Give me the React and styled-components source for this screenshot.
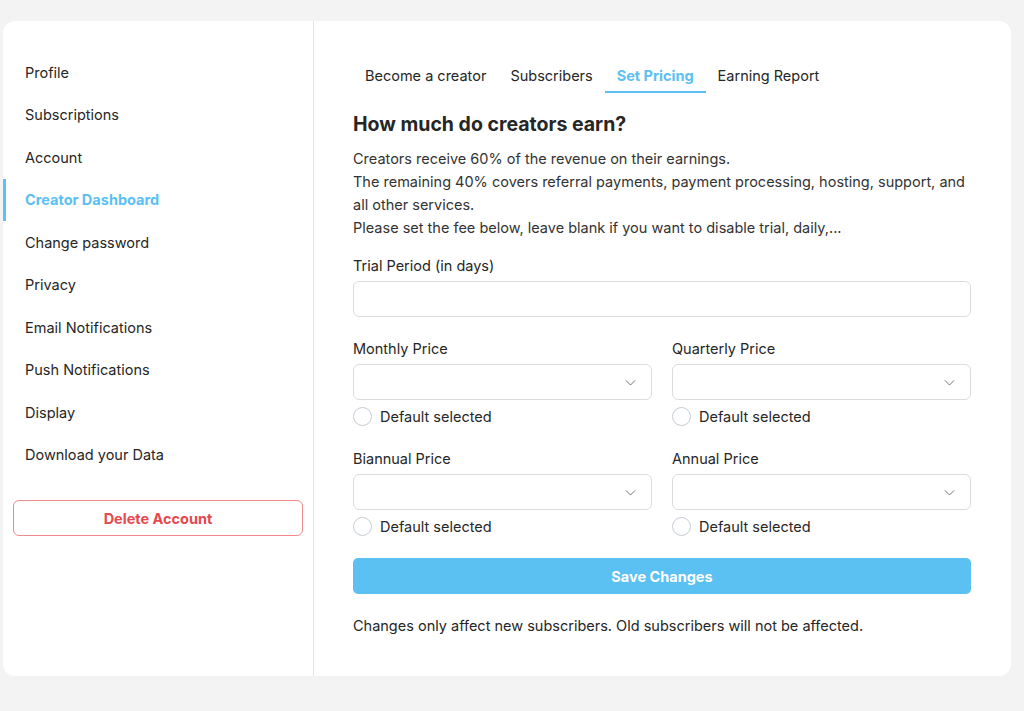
import React, { useState } from 'react';
import styled, { createGlobalStyle } from 'styled-components';

const GlobalStyle = createGlobalStyle`
  html, body {
    margin: 0;
    padding: 0;
    background: #f3f3f3;
  }
  body {
    font-family: 'Inter', 'Noto Sans', 'Liberation Sans', sans-serif;
    color: #262626;
  }
  * { box-sizing: border-box; }
`;

const Page = styled.div`
  padding: 21px 13px 35px 3px;
`;

const Card = styled.div`
  background: #ffffff;
  border-radius: 12px;
  display: flex;
  height: 655px;
  overflow: hidden;
`;

const Sidebar = styled.nav`
  width: 311px;
  flex-shrink: 0;
  border-right: 1px solid #e3e3e3;
  padding-top: 30px;
  display: flex;
  flex-direction: column;
`;

const NavItem = styled.a`
  height: 42.5px;
  display: flex;
  align-items: center;
  padding-left: 19px;
  border-left: 3px solid ${(p) => (p.$active ? '#5bc0f2' : 'transparent')};
  font-size: 14.5px;
  font-weight: ${(p) => (p.$active ? 700 : 400)};
  color: ${(p) => (p.$active ? '#5bc0f2' : '#262626')};
  cursor: pointer;
`;

const DeleteButton = styled.button`
  margin: 24px 10px 0;
  height: 36px;
  border: 1.5px solid #f08a8a;
  border-radius: 6px;
  background: #ffffff;
  color: #e5484d;
  font-family: inherit;
  font-size: 14.5px;
  font-weight: 700;
  cursor: pointer;
`;

const Main = styled.main`
  flex: 1;
  padding: 45px 40px 0 39px;
  display: flex;
  flex-direction: column;
`;

const Tabs = styled.div`
  display: flex;
`;

const Tab = styled.button`
  background: none;
  border: none;
  border-bottom: 2px solid ${(p) => (p.$active ? '#5bc0f2' : 'transparent')};
  padding: 0 12px 5px;
  line-height: 20px;
  font-family: inherit;
  font-size: 14.5px;
  font-weight: ${(p) => (p.$active ? 700 : 400)};
  color: ${(p) => (p.$active ? '#5bc0f2' : '#262626')};
  cursor: pointer;
`;

const Heading = styled.h2`
  margin: 17px 0 0;
  font-size: 19.5px;
  line-height: 28px;
  font-weight: 700;
  color: #262626;
`;

const Intro = styled.div`
  margin-top: 8.5px;
  font-size: 14.5px;
  line-height: 23px;
  color: #333;
`;

const Field = styled.div`
  display: flex;
  flex-direction: column;
  gap: 5px;
  margin-top: ${(p) => p.$top || 0}px;
`;

const Label = styled.label`
  font-size: 14.5px;
  line-height: 20px;
  color: #262626;
`;

const Input = styled.input`
  height: 36px;
  width: 100%;
  border: 1px solid #dcdcdc;
  border-radius: 6px;
  padding: 0 12px;
  font-family: inherit;
  font-size: 14.5px;
  outline: none;
`;

const PriceGrid = styled.div`
  display: grid;
  grid-template-columns: 1fr 1fr;
  column-gap: 20px;
  row-gap: 23px;
  margin-top: 22px;
`;

const SelectBox = styled.div`
  height: 36px;
  border: 1px solid #dcdcdc;
  border-radius: 6px;
  display: flex;
  align-items: center;
  justify-content: flex-end;
  padding-right: 13px;
  color: #6b6b6b;
  cursor: pointer;
`;

const RadioRow = styled.label`
  display: flex;
  align-items: center;
  gap: 8px;
  margin-top: 1px;
  height: 20px;
  font-size: 14.5px;
  color: #262626;
  cursor: pointer;
`;

const Circle = styled.span`
  width: 19px;
  height: 19px;
  border-radius: 50%;
  border: 1.5px solid ${(p) => (p.$on ? '#5bc0f2' : '#c5ccd4')};
  background: ${(p) => (p.$on ? 'radial-gradient(#5bc0f2 40%, #fff 45%)' : '#fff')};
`;

const SaveButton = styled.button`
  margin-top: 22px;
  height: 36px;
  border: none;
  border-radius: 5px;
  background: #5bc0f2;
  color: #ffffff;
  font-family: inherit;
  font-size: 14.5px;
  font-weight: 700;
  cursor: pointer;
`;

const Note = styled.p`
  margin: 22px 0 0;
  font-size: 14.5px;
  line-height: 20px;
  color: #262626;
`;

const Chevron = () => (
  <svg width="15" height="15" viewBox="0 0 24 24" fill="none" stroke="currentColor" strokeWidth="1.5" strokeLinecap="round" strokeLinejoin="round">
    <path d="M5 9l7 7 7-7" />
  </svg>
);

const navItems = [
  'Profile',
  'Subscriptions',
  'Account',
  'Creator Dashboard',
  'Change password',
  'Privacy',
  'Email Notifications',
  'Push Notifications',
  'Display',
  'Download your Data',
];

const tabs = ['Become a creator', 'Subscribers', 'Set Pricing', 'Earning Report'];
const prices = ['Monthly Price', 'Quarterly Price', 'Biannual Price', 'Annual Price'];

const App = () => {
  const [active, setActive] = useState('Creator Dashboard');
  const [tab, setTab] = useState('Set Pricing');
  const [defaultPrice, setDefaultPrice] = useState(null);

  return (
    <Page>
      <GlobalStyle />
      <Card>
        <Sidebar>
          {navItems.map((item) => (
            <NavItem key={item} $active={item === active} onClick={() => setActive(item)}>
              {item}
            </NavItem>
          ))}
          <DeleteButton>Delete Account</DeleteButton>
        </Sidebar>
        <Main>
          <Tabs>
            {tabs.map((t) => (
              <Tab key={t} $active={t === tab} onClick={() => setTab(t)}>
                {t}
              </Tab>
            ))}
          </Tabs>
          <Heading>How much do creators earn?</Heading>
          <Intro>
            Creators receive 60% of the revenue on their earnings.
            <br />
            The remaining 40% covers referral payments, payment processing, hosting, support, and all other services.
            <br />
            Please set the fee below, leave blank if you want to disable trial, daily,...
          </Intro>
          <Field $top={17.5}>
            <Label>Trial Period (in days)</Label>
            <Input />
          </Field>
          <PriceGrid>
            {prices.map((p) => (
              <Field key={p}>
                <Label>{p}</Label>
                <SelectBox>
                  <Chevron />
                </SelectBox>
                <RadioRow onClick={() => setDefaultPrice(p)}>
                  <Circle $on={defaultPrice === p} />
                  Default selected
                </RadioRow>
              </Field>
            ))}
          </PriceGrid>
          <SaveButton>Save Changes</SaveButton>
          <Note>Changes only affect new subscribers. Old subscribers will not be affected.</Note>
        </Main>
      </Card>
    </Page>
  );
};

export default App;
